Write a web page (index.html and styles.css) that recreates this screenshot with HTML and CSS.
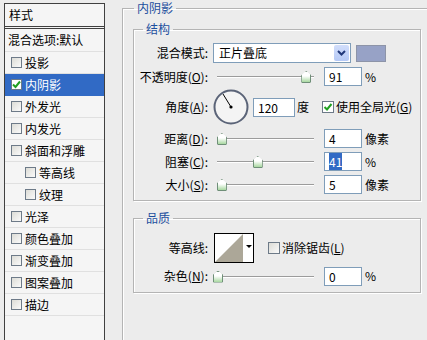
FILE: index.html
```html
<!DOCTYPE html>
<html>
<head>
  <meta charset="UTF-8">
  <title>图层样式 - 内阴影</title>
  <link rel="stylesheet" href="styles.css">
</head>
<body>
  <div class="dialog">
    <div class="styles">
      <div class="styles-head">样式</div>
      <div class="item plain">混合选项:默认</div>
      <div class="item"><span class="cb"></span>投影</div>
      <div class="item active"><span class="cb on"><svg width="9" height="9" viewBox="0 0 9 9"><path d="M1 4.5 L3.5 7 L8 1.5" fill="none" stroke="#21a121" stroke-width="2"/></svg></span>内阴影</div>
      <div class="item"><span class="cb"></span>外发光</div>
      <div class="item"><span class="cb"></span>内发光</div>
      <div class="item"><span class="cb"></span>斜面和浮雕</div>
      <div class="item sub"><span class="cb"></span>等高线</div>
      <div class="item sub"><span class="cb"></span>纹理</div>
      <div class="item"><span class="cb"></span>光泽</div>
      <div class="item"><span class="cb"></span>颜色叠加</div>
      <div class="item"><span class="cb"></span>渐变叠加</div>
      <div class="item"><span class="cb"></span>图案叠加</div>
      <div class="item"><span class="cb"></span>描边</div>
    </div>

    <div class="main">
      <fieldset class="group outer">
        <legend>内阴影</legend>

        <fieldset class="group inner structure">
          <legend>结构</legend>
          <div class="row r-blend">
            <label>混合模式:</label>
            <div class="select">正片叠底<span class="drop"><svg width="9" height="6" viewBox="0 0 9 6"><path d="M1 1 L4.5 4.5 L8 1" fill="none" stroke="#21387a" stroke-width="2"/></svg></span></div>
            <span class="swatch"></span>
          </div>
          <div class="row r-opacity">
            <label>不透明度(<u>O</u>):</label>
            <div class="slider"><span class="thumb" style="left: 91%"></span></div>
            <span class="field">91</span>
            <span class="unit">%</span>
          </div>
          <div class="row r-angle">
            <label>角度(<u>A</u>):</label>
            <div class="dial">
              <svg width="36" height="36" viewBox="0 0 36 36">
                <circle cx="18" cy="18" r="16.5" fill="#f4f4f4" stroke="#5b6478" stroke-width="2"/>
                <line x1="18" y1="18" x2="10" y2="5" stroke="#000" stroke-width="1"/>
                <circle cx="18" cy="18" r="1.6" fill="#000"/>
              </svg>
            </div>
            <span class="field wide">120</span>
            <span class="unit">度</span>
            <span class="cb on big"><svg width="10" height="10" viewBox="0 0 10 10"><path d="M1.5 5 L4 7.5 L8.5 2" fill="none" stroke="#21a121" stroke-width="2"/></svg></span>
            <span class="check-label">使用全局光(<u>G</u>)</span>
          </div>
          <div class="row r-dist">
            <label>距离(<u>D</u>):</label>
            <div class="slider"><span class="thumb" style="left: 4%"></span></div>
            <span class="field">4</span>
            <span class="unit">像素</span>
          </div>
          <div class="row r-choke">
            <label>阻塞(<u>C</u>):</label>
            <div class="slider"><span class="thumb" style="left: 41%"></span></div>
            <span class="field"><span class="sel">41</span></span>
            <span class="unit">%</span>
          </div>
          <div class="row r-size">
            <label>大小(<u>S</u>):</label>
            <div class="slider"><span class="thumb" style="left: 4%"></span></div>
            <span class="field">5</span>
            <span class="unit">像素</span>
          </div>
        </fieldset>

        <fieldset class="group inner quality">
          <legend>品质</legend>
          <div class="row r-contour">
            <label>等高线:</label>
            <div class="contour">
              <svg width="28" height="28" viewBox="0 0 28 28"><polygon points="0,28 28,0 28,28" fill="#aca798"/></svg>
              <span class="contour-drop"></span>
            </div>
            <span class="cb big"></span>
            <span class="check-label">消除锯齿(<u>L</u>)</span>
          </div>
          <div class="row r-noise">
            <label>杂色(<u>N</u>):</label>
            <div class="slider"><span class="thumb" style="left: 0%"></span></div>
            <span class="field">0</span>
            <span class="unit">%</span>
          </div>
        </fieldset>
      </fieldset>
    </div>
  </div>
</body>
</html>
```

FILE: styles.css
```css
body { margin: 0; background: #ececec; color: #000; font: 12px/16px "Noto Sans CJK SC", "Liberation Sans", sans-serif; width: 427px; height: 340px; overflow: hidden; }
.dialog { display: flex; align-items: flex-start; height: 340px; overflow: hidden; }

/* style list on the left */
.styles {
  flex: none;
  box-sizing: border-box;
  width: 101px;
  height: 337px;
  margin: 3px 0 0 4px;
  border: 1px solid #404040;
  border-bottom: none;
  background: #f5f5f5;
}
.styles-head {
  height: 22px;
  line-height: 22px;
  padding-left: 4px;
  border-bottom: 3px double #404040;
}
.item {
  box-sizing: border-box;
  height: 22px;
  display: flex;
  align-items: center;
  padding-left: 6px;
  border-bottom: 1px solid #e0e0e0;
}
.item.plain { padding-left: 3px; height: 23px; }
.item.sub { padding-left: 20px; }
.item.active { background: #316ac5; color: #fff; border-bottom-color: #316ac5; }
.cb {
  box-sizing: border-box;
  flex: none;
  width: 11px;
  height: 11px;
  margin-right: 3px;
  border: 1px solid #6d7a88;
  background: linear-gradient(135deg, #dcdcd6, #fafafa);
  display: flex;
  align-items: center;
  justify-content: center;
}
.cb.on { background: #fff; }
.cb.big { width: 12px; height: 12px; }

/* right side groups */
.main { flex: 1; margin: 0 -6px 0 17px; }
.group {
  margin: 0;
  padding: 0;
  border: 1px solid #b4b4b4;
  box-shadow: inset 1px 1px 0 #fff, 1px 1px 0 #fff;
}
.group legend { color: #1d4f9e; padding: 0 3px; margin-left: 11px; line-height: 16px; }
.outer { box-sizing: border-box; height: 340px; border-bottom: none; }
.inner { margin: 5px 11px 0 10px; padding: 0 0 6px 0; }
.inner legend { margin-left: 9px; }
.structure { padding-top: 6px; }
.quality { margin-top: 9px; padding-top: 7px; }

.row { display: flex; align-items: center; }
.row label { flex: none; width: 74px; text-align: right; margin-right: 5px; white-space: nowrap; }
.r-blend { height: 20px; }
.r-opacity { height: 19px; margin-top: 4px; }
.r-angle { height: 36px; margin-top: 3px; }
.r-dist { height: 19px; margin-top: 4px; }
.r-choke { height: 19px; margin-top: 4px; }
.r-size { height: 19px; margin-top: 4px; }
.r-contour { height: 30px; }
.r-noise { height: 20px; margin-top: 3px; }

.select {
  box-sizing: border-box;
  position: relative;
  width: 138px;
  height: 20px;
  padding-left: 5px;
  line-height: 18px;
  border: 1px solid #7f9db9;
  background: #fff;
}
.drop {
  position: absolute;
  top: 1px;
  right: 1px;
  width: 15px;
  height: 16px;
  border-radius: 2px;
  background: linear-gradient(#d2defb, #b5c9f6);
  display: flex;
  align-items: center;
  justify-content: center;
}
.swatch { width: 30px; height: 17px; margin-left: 5px; background: #97a2c6; box-shadow: inset 0 0 0 1px #8d94a8; }

.slider { position: relative; width: 97px; height: 19px; margin-left: 4px; margin-right: 10px; }
.slider::before { content: ""; position: absolute; left: 0; right: 0; top: 9px; height: 1px; background: #9c9c9c; box-shadow: 0 1px 0 #fff; }
.thumb {
  position: absolute;
  top: 4px;
  width: 8px;
  height: 10px;
  margin-left: -4px;
  background: linear-gradient(#ffffff 40%, #a8d8a0);
  border: 1px solid #6f8f78;
  border-radius: 3px 3px 1px 1px;
  clip-path: polygon(0 35%, 50% 0, 100% 35%, 100% 100%, 0 100%);
}

.field {
  box-sizing: border-box;
  width: 38px;
  height: 19px;
  padding-left: 4px;
  line-height: 17px;
  border: 1px solid #7f9db9;
  background: #fff;
}
.field.wide { width: 42px; margin-left: 4px; }
.sel { background: #316ac5; color: #fff; }
.unit { margin-left: 3px; }
.r-angle .unit { margin-left: 2px; }
.r-angle .cb { margin-left: 13px; margin-right: 2px; }
.dial { width: 36px; height: 36px; }

.contour {
  box-sizing: border-box;
  display: flex;
  width: 40px;
  height: 30px;
  margin-left: 1px;
  border: 1px solid #000;
  background: #fff;
}
.contour-drop { flex: 1; position: relative; }
.contour-drop::after { content: ""; position: absolute; left: 3px; top: 11px; border: 3px solid transparent; border-top: 3px solid #000; }
.r-contour .cb { margin-left: 14px; margin-right: 2px; }
.r-noise .slider { margin-left: 4px; }
```
